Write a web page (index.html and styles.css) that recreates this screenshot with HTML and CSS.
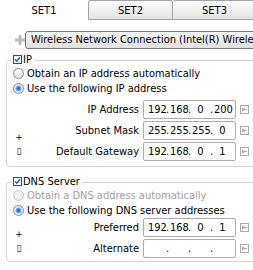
FILE: index.html
```html
<!DOCTYPE html>
<html lang="en">

<head>
  <meta charset="UTF-8">
  <meta name="viewport" content="width=device-width, initial-scale=1.0">
  <title>Network sets</title>
  <link rel="stylesheet" href="styles.css">
</head>

<body>
  <div class="tabs">
    <div class="tab tab-first active">SET1</div>
    <div class="tab tab-mid">SET2</div>
    <div class="tab tab-last">SET3</div>
  </div>

  <div class="adapter-row">
    <span class="add">
      <svg width="10" height="10" viewBox="0 0 10 10">
        <rect x="0" y="3.5" width="10" height="3" fill="#b9b9b9" />
        <rect x="3.5" y="0" width="3" height="10" fill="#b9b9b9" />
      </svg>
    </span>
    <div class="adapter">Wireless Network Connection (Intel(R) Wireless WiFi Link 4965AGN)</div>
  </div>

  <fieldset class="group group-ip">
    <legend>
      <svg class="check" width="9" height="9" viewBox="0 0 9 9">
        <rect x="0.5" y="0.5" width="8" height="8" fill="#fff" stroke="#2b4f7a" />
        <path d="M2 4.3 L3.8 6.2 L7 2.2" fill="none" stroke="#2456c9" stroke-width="1.5" />
      </svg>IP
    </legend>
    <div class="option"><span class="radio"></span>Obtain an IP address automatically</div>
    <div class="option"><span class="radio on"></span>Use the following IP address</div>

    <div class="fields fields-ip">
      <div class="side"><span class="plus">+</span><span class="slot">▯</span></div>
      <div class="rows">
        <label>IP Address</label>
        <div class="ip"><span>192</span><i>.</i><span>168</span><i>.</i><span>0</span><i>.</i><span>200</span></div>
        <svg class="pick" width="9" height="9" viewBox="0 0 9 9">
          <rect x="0.5" y="0.5" width="8" height="8" fill="none" stroke="#a9a9a9" />
          <path d="M2.5 2.5v4M3 4.5h4M3 4.5l1.5-1.5M3 4.5l1.5 1.5" fill="none" stroke="#a9a9a9" />
        </svg>

        <label>Subnet Mask</label>
        <div class="ip"><span>255</span><i>.</i><span>255</span><i>.</i><span>255</span><i>.</i><span>0</span></div>
        <svg class="pick" width="9" height="9" viewBox="0 0 9 9">
          <rect x="0.5" y="0.5" width="8" height="8" fill="none" stroke="#a9a9a9" />
          <path d="M2.5 2.5v4M3 4.5h4M3 4.5l1.5-1.5M3 4.5l1.5 1.5" fill="none" stroke="#a9a9a9" />
        </svg>

        <label>Default Gateway</label>
        <div class="ip"><span>192</span><i>.</i><span>168</span><i>.</i><span>0</span><i>.</i><span>1</span></div>
        <svg class="pick" width="9" height="9" viewBox="0 0 9 9">
          <rect x="0.5" y="0.5" width="8" height="8" fill="none" stroke="#a9a9a9" />
          <path d="M2.5 2.5v4M3 4.5h4M3 4.5l1.5-1.5M3 4.5l1.5 1.5" fill="none" stroke="#a9a9a9" />
        </svg>
      </div>
    </div>
  </fieldset>

  <fieldset class="group group-dns">
    <legend>
      <svg class="check" width="9" height="9" viewBox="0 0 9 9">
        <rect x="0.5" y="0.5" width="8" height="8" fill="#fff" stroke="#2b4f7a" />
        <path d="M2 4.3 L3.8 6.2 L7 2.2" fill="none" stroke="#2456c9" stroke-width="1.5" />
      </svg>DNS Server
    </legend>
    <div class="option disabled"><span class="radio"></span>Obtain a DNS address automatically</div>
    <div class="option"><span class="radio on"></span>Use the following DNS server addresses</div>

    <div class="fields fields-dns">
      <div class="side"><span class="plus">+</span><span class="slot">▯</span></div>
      <div class="rows">
        <label>Preferred</label>
        <div class="ip"><span>192</span><i>.</i><span>168</span><i>.</i><span>0</span><i>.</i><span>1</span></div>
        <svg class="pick" width="9" height="9" viewBox="0 0 9 9">
          <rect x="0.5" y="0.5" width="8" height="8" fill="none" stroke="#a9a9a9" />
          <path d="M2.5 2.5v4M3 4.5h4M3 4.5l1.5-1.5M3 4.5l1.5 1.5" fill="none" stroke="#a9a9a9" />
        </svg>

        <label>Alternate</label>
        <div class="ip"><span></span><i>.</i><span></span><i>.</i><span></span><i>.</i><span></span></div>
        <svg class="pick" width="9" height="9" viewBox="0 0 9 9">
          <rect x="0.5" y="0.5" width="8" height="8" fill="none" stroke="#a9a9a9" />
          <path d="M2.5 2.5v4M3 4.5h4M3 4.5l1.5-1.5M3 4.5l1.5 1.5" fill="none" stroke="#a9a9a9" />
        </svg>
      </div>
    </div>
  </fieldset>

  <fieldset class="group group-wins">
    <legend>
      <svg class="check" width="9" height="9" viewBox="0 0 9 9">
        <rect x="0.5" y="0.5" width="8" height="8" fill="#fff" stroke="#2b4f7a" />
      </svg>WINS Server
    </legend>
  </fieldset>
</body>

</html>
```

FILE: styles.css
```css
* {
  box-sizing: border-box;
}

body {
  margin: 0;
  width: 253px;
  height: 270px;
  overflow: hidden;
  background: #fff;
  color: #000;
  font-family: "DejaVu Sans Condensed", "Liberation Sans", sans-serif;
  font-size: 11px;
}

/* tab strip */
.tabs {
  display: flex;
  height: 20px;
}

.tab {
  flex: 0 0 auto;
  text-align: center;
  line-height: 19px;
  border: 1px solid #a3a3a3;
  border-radius: 2px 2px 0 0;
  background: linear-gradient(#fcfcfc, #e4e4e4);
}

.tab-first {
  width: 88px;
}

.tab-mid {
  width: 85px;
}

.tab-last {
  width: 84px;
  border-left: none;
}

.tab.active {
  background: #fff;
  border-color: transparent;
}

/* adapter picker */
.adapter-row {
  display: flex;
  align-items: center;
  margin-top: 11px;
  height: 18px;
}

.add {
  display: flex;
  width: 33px;
  padding-left: 15px;
}

.adapter {
  flex: 0 0 240px;
  height: 18px;
  line-height: 16px;
  padding-left: 5px;
  border: 1px solid #767676;
  border-radius: 3px;
  background: linear-gradient(#f7f7f7, #e1e1e1);
  white-space: nowrap;
  overflow: hidden;
}

/* groups */
.group {
  width: 280px;
  margin: 5px 0 0 6px;
  padding: 0 0 5px 0;
  border: 1px solid #d3d3d3;
  border-radius: 4px;
}

.group legend {
  margin-left: 4px;
  padding: 0 2px;
  line-height: 12px;
  white-space: nowrap;
}

.check {
  display: inline-block;
  vertical-align: -1px;
  margin-right: 1px;
}

.group-dns {
  margin-top: 9px;
  padding-bottom: 3px;
}

.group-wins {
  margin-top: 7px;
  height: 20px;
}

.option {
  display: flex;
  align-items: center;
  height: 15px;
  white-space: nowrap;
}

.option.disabled {
  color: #a0a0a0;
}

.radio {
  flex: 0 0 11px;
  width: 11px;
  height: 11px;
  margin: 0 3px 0 6px;
  border: 1px solid #8c8c8c;
  border-radius: 50%;
  background: radial-gradient(circle at 40% 35%, #fdfdfd, #d6d6d6);
}

.radio.on {
  background: radial-gradient(circle, #0c5ccc 0, #3b89e6 1.5px, #8fbcf0 2.8px, #f6f6f6 3.4px, #d9d9d9 5px);
}

.option.disabled .radio {
  border-color: #c4c4c4;
  background: radial-gradient(circle at 40% 35%, #fbfbfb, #e6e6e6);
}

/* address rows */
.fields {
  display: flex;
}

.fields-ip {
  margin-top: 4px;
}

.side {
  display: flex;
  flex-direction: column;
  justify-content: flex-end;
  align-items: center;
  width: 24px;
  font-family: "DejaVu Sans", sans-serif;
  font-size: 9px;
}

.plus {
  line-height: 10px;
}

.slot {
  line-height: 19px;
}

.rows {
  display: grid;
  grid-template-columns: 112px 93px 13px;
  grid-auto-rows: 19px;
  row-gap: 2px;
}

.rows label {
  text-align: right;
  padding-right: 4px;
  line-height: 19px;
  white-space: nowrap;
}

.ip {
  display: flex;
  align-items: center;
  padding-left: 4px;
  border: 1px solid #abadb3;
  border-radius: 2px;
  background: #fff;
}

.ip span {
  width: 17px;
  text-align: center;
}

.ip i {
  width: 5px;
  font-style: normal;
  text-align: center;
}

.pick {
  align-self: center;
  margin-left: 4px;
}
```
